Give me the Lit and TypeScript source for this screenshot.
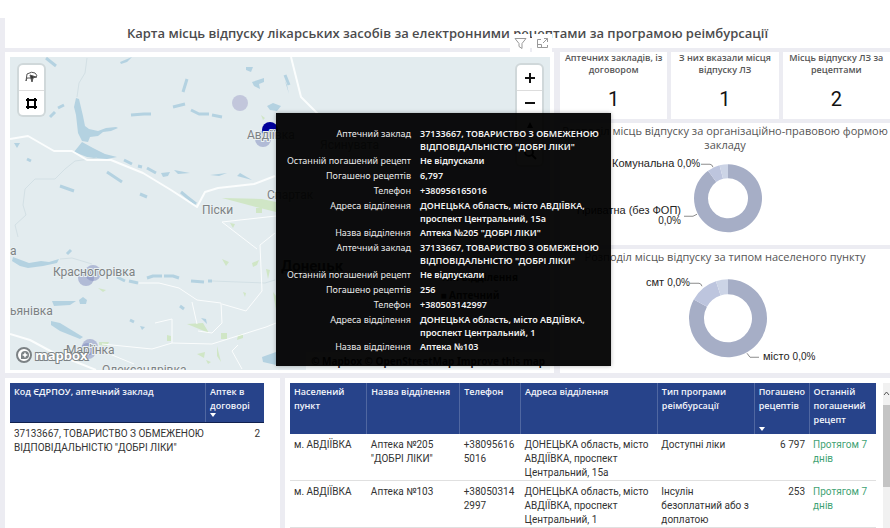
import { LitElement, html, css, svg } from "lit";
import { customElement, property } from "lit/decorators.js";

const base = css`
  :host { display: block; box-sizing: border-box; font-family: "Open Sans", "Noto Sans", sans-serif; }
  *, *::before, *::after { box-sizing: border-box; }
`;

interface Slice { value: number; color: string; }

@customElement("donut-chart")
class DonutChart extends LitElement {
  @property() viewBox = "0 0 100 100";
  @property({ attribute: false }) slices: Slice[] = [];
  @property({ attribute: false }) labels: unknown = null;
  @property({ type: Number }) cx = 0;
  @property({ type: Number }) cy = 0;
  @property({ type: Number }) outer = 30;
  @property({ type: Number }) inner = 20;

  static styles = [base, css`
    :host { display: block; min-height: 0; }
    svg { display: block; width: 100%; height: 100%; overflow: visible; }
    .lead { fill: none; stroke: #8c8c8c; stroke-width: 1; }
    .lbl { font: 11px "Liberation Sans", Arial, sans-serif; fill: #252423; }
    .lbl .pct, .lbl.pct { font-size: 10px; }
    .end { text-anchor: end; }
  `];

  private arc(from: number, to: number) {
    const pt = (r: number, t: number) => {
      const a = t * Math.PI * 2 - Math.PI / 2;
      return `${(this.cx + r * Math.cos(a)).toFixed(2)} ${(this.cy + r * Math.sin(a)).toFixed(2)}`;
    };
    const big = to - from > 0.5 ? 1 : 0;
    const { outer: o, inner: i } = this;
    return `M${pt(o, from)}A${o} ${o} 0 ${big} 1 ${pt(o, to)}L${pt(i, to)}A${i} ${i} 0 ${big} 0 ${pt(i, from)}Z`;
  }

  render() {
    let t = 0;
    return html`<svg viewBox=${this.viewBox} role="img">
      ${this.slices.map((s) => {
        const from = t;
        t += s.value;
        return svg`<path d=${this.arc(from, t)} fill=${s.color}></path>`;
      })}
      ${this.labels}
    </svg>`;
  }
}

@customElement("map-canvas")
class MapCanvas extends LitElement {
  static styles = [base, css`
    :host { display: block; position: relative; overflow: hidden; background: #e3ecef; }
    .map { position: absolute; inset: 0; width: 100%; height: 100%; }
    .water { fill: #b4d2e1; }
    .stream { fill: none; stroke: #b4d2e1; stroke-width: 3; stroke-linejoin: round; }
    .brook { fill: none; stroke: #d3e0e5; stroke-width: 1; }
    .green { fill: #d0e6c6; }
    .road { fill: none; stroke: #fbfdfd; stroke-width: 2; stroke-linejoin: round; }
    .thin { stroke-width: 1; }
    .town { font: 12px Roboto, "Noto Sans", sans-serif; fill: #7d8284; stroke: #e9f0f2; stroke-width: 2; paint-order: stroke; }
    .city { font-size: 15px; font-weight: 700; fill: #333; }
    .dot { fill: #8089bd; fill-opacity: .5; }
    .pale { fill: #b3b7d3; fill-opacity: .7; }
    .brand { font: 700 13px "Open Sans", sans-serif; fill: #fff; stroke: #7c8285; stroke-width: 2; paint-order: stroke; }
    .tools { position: absolute; top: 8px; display: flex; flex-direction: column; border-radius: 4px; background: #fff; box-shadow: 0 0 0 2px #d0d8da; }
    .left { left: 9px; }
    .right { right: 8px; }
    button { width: 25px; height: 25px; padding: 0; border: 0; background: none; display: grid; place-items: center; }
    button + button { border-top: 1px solid #ddd; }
    .legend { position: absolute; right: 32px; bottom: 66px; font: 700 10px "Noto Sans", sans-serif; line-height: 18px; color: #222; }
    .credit { position: absolute; right: 0; bottom: 0; padding: 2px 5px; font: 700 10px "Noto Sans", sans-serif; line-height: 14px; color: #222; background: #f3f7f8; white-space: nowrap; }
  `];

  render() {
    return html`
      <svg class="map" viewBox="10 57 540 313" preserveAspectRatio="xMinYMin slice">
        <g class="green">
          <path d="M222 198l40 1 14 3v10l-16-4z"></path>
          <path d="M222 259l7 3-3 4zM252 263l7-3-2 5-4 2zM187 324l16-1 6 10zM221 333h6v6h-6zM238 335l5-1v4l-6 2z"></path>
          <path d="M99 342h10l-2 4-8-1zM197 354l8-2-1 6zM167 335l4 1v5h-4zM266 269l4 1-2 9zM230 223l5 1-2 4zM256 208h6v5h-6zM98 288l8 2-3 2zM261 115l4 3-2 2z"></path>
          <path d="M217 346l4 16-4-6zM243 292l3 1-1 4zM273 292l3 4v14zM206 360l5 2-3 2z"></path>
        </g>
        <g class="water">
          <path d="M76 98l3 1 4 17 2 10 4 3 9 2 8-3 10-1 2 1-7 3-8 1-5 4-8 1-2 5-6-1-4-8-1-9-1-9-2-8z"></path>
          <path d="M82 142l11 6 12 6 12 3-10 2-13-1-7-1-13-5z"></path>
          <path d="M13 257l16 6 12-2 8 1 10-3-2 4-14 3-15 2-8-2-8-5z"></path>
          <path d="M51 321l9 2 23 14-3 2-20-8-9-6z"></path>
          <path d="M52 301l24 0-6 4-16 1zM79 300l4-3 4 3-1 4-6 0z"></path>
          <path d="M267 106l6-3 8 3-4 5-7-1zM246 67l7 0-2 5-5-2zM252 82l12-4v4l-5 2 1 5-6-3zM120 62l12-5-5 5-6 2z"></path>
          <path d="M161 173l9-1-2 4-5 1zM262 357l14-5v13l-13-3zM14 143h6l-3 5zM140 326l5 1-3 3zM201 318l5 1 1 5z"></path>
          <path d="M174 170l16 3-12 1zM210 175l17-2-8 3zM240 173l12 7-15-4zM285 81l4 13-2-9z"></path>
        </g>
        <g class="stream">
          <path d="M46 58l10 8M183 92l4-13M173 107l12-3M191 110l8 4 10 0M212 115l10 2M131 115l13-1 7 0M50 117l5-5M58 108l6-3"></path>
          <path d="M107 172l15 10M124 160l8 4M138 166l4 1M147 168l9 5M60 186l14 5M140 194l7 3M181 192l6 5 9 7M67 254l4-4"></path>
          <path d="M117 277l8 4M129 281l9 2M147 278l6-2 9 0M164 276l9 0 6 2M191 281l13 1M208 281h4M130 320l4 2M180 306l4 3M27 159l4 2M285 75l4 10"></path>
        </g>
        <path class="brook" d="M87 58l-2 15-6 10-2 14M97 158l-22 3-10 8-10 10-20 0-10 10-2 16 3 10-11 10 3 12M60 259l12-1 20 6M212 281l53 2 10-3"></path>
        <g class="road">
          <path d="M10 139l18-3 26 15h18l15 9h24l32 13 28 17 26 17 8-15 13-4 36-4 21-8"></path>
          <path d="M291 57l10 40 20 20M10 334l20 6 26 14 40 16"></path>
          <path class="thin" d="M139 283h20l20 5 18 12 24 3 1 20-10 10-14-2M192 302l5 22M222 304l24 7 16-20-2-46 15-12M222 222l35 27M155 323l17-4v24l-20 6-50-5M172 343l40 1 54-17 10-4M222 222l54-6M238 345l-6 6 10 18M100 350l34 14"></path>
        </g>
        <circle class="pale" cx="240" cy="103" r="8"></circle>
        <circle class="dot" cx="263" cy="139" r="8"></circle>
        <circle cx="270" cy="130" r="8" fill="#00009b"></circle>
        <circle class="dot" cx="86" cy="278" r="8"></circle>
        <circle class="dot" cx="93" cy="273" r="8"></circle>
        <circle class="dot" cx="90" cy="347" r="8"></circle>
        <circle class="dot" cx="88" cy="351" r="8"></circle>
        <g class="town">
          <text x="247" y="139">Авдіївка</text>
          <text x="320" y="149">Ясинувата</text>
          <text x="267" y="199">Спартак</text>
          <text x="202" y="214">Піски</text>
          <text x="10" y="255">а</text>
          <text x="53" y="276">Красногорівка</text>
          <text x="10" y="315">ьянівка</text>
          <text x="66" y="354">Мар'їнка</text>
          <text x="102" y="374">Олександрівка</text>
          <text class="city" x="281" y="271">Донецьк</text>
        </g>
        <circle cx="24" cy="355" r="7" fill="#fff" stroke="#7c8285" stroke-width="2"></circle>
        <path d="M21 359v-4a4 4 0 1 1 4 4z" fill="#7c8285"></path>
        <path d="M25 352l1 2 2 1-2 1-1 2-1-2-2-1 2-1z" fill="#fff"></path>
        <text class="brand" x="35" y="360">mapbox</text>
      </svg>
      <div class="tools left">
        <button aria-label="Ласо"><svg width="13" height="13" viewBox="0 0 13 13" fill="none" stroke="#555"><path d="M1 10l1-7q5-3 8-1 3 2 1 5M1 10l1-3 4 0"></path><path d="M5 4l6 2-3 1-1 4z" fill="#333"></path></svg></button>
        <button aria-label="Багатокутник"><svg width="11" height="11" viewBox="0 0 11 11" fill="none" stroke="#000" stroke-width="2"><path d="M2 2h7v7H2z"></path><path d="M0 2h3M8 2h3M0 9h3M8 9h3M2 0v3M9 0v3M2 8v3M9 8v3"></path></svg></button>
      </div>
      <div class="tools right">
        <button aria-label="Збільшити"><svg width="10" height="10" stroke="#111" stroke-width="2"><path d="M5 0v10M0 5h10"></path></svg></button>
        <button aria-label="Зменшити"><svg width="10" height="10" stroke="#111" stroke-width="2"><path d="M0 5h10"></path></svg></button>
        <button aria-label="Північ"><svg width="10" height="12"><path d="M5 0l3 6H2z"></path></svg></button>
        <button aria-label="Пошук"><svg width="14" height="14" fill="none" stroke="#111" stroke-width="2"><circle cx="6" cy="6" r="4"></circle><path d="M9 9l4 4"></path></svg></button>
      </div>
      <div class="legend"><div>Тип відділення</div><div>■ Аптечний</div></div>
      <div class="credit">© Mapbox © OpenStreetMap Improve this map</div>
    `;
  }
}

const org = "37133667, ТОВАРИСТВО З ОБМЕЖЕНОЮ ВІДПОВІДАЛЬНІСТЮ \"ДОБРІ ЛІКИ\"";
const tip: [string, string][] = [
  ["Аптечний заклад", org],
  ["Останній погашений рецепт", "Не відпускали"],
  ["Погашено рецептів", "6,797"],
  ["Телефон", "+380956165016"],
  ["Адреса відділення", "ДОНЕЦЬКА область, місто АВДІЇВКА, проспект Центральний, 15а"],
  ["Назва відділення", "Аптека №205 \"ДОБРІ ЛІКИ\""],
  ["Аптечний заклад", org],
  ["Останній погашений рецепт", "Не відпускали"],
  ["Погашено рецептів", "256"],
  ["Телефон", "+380503142997"],
  ["Адреса відділення", "ДОНЕЦЬКА область, місто АВДІЇВКА, проспект Центральний, 1"],
  ["Назва відділення", "Аптека №103"],
];

const rows = [
  ["м. АВДІЇВКА", "Аптека №205 \"ДОБРІ ЛІКИ\"", "+380956165016", "ДОНЕЦЬКА область, місто АВДІЇВКА, проспект Центральний, 15а", "Доступні ліки", "6 797", "Протягом 7 днів"],
  ["м. АВДІЇВКА", "Аптека №103", "+380503142997", "ДОНЕЦЬКА область, місто АВДІЇВКА, проспект Центральний, 1", "Інсулін безоплатний або з доплатою", "253", "Протягом 7 днів"],
];

const cards = [
  ["Аптечних закладів, із договором", "1"],
  ["З них вказали місця відпуску ЛЗ", "1"],
  ["Місць відпуску ЛЗ за рецептами", "2"],
];

@customElement("app-root")
class AppRoot extends LitElement {
  static styles = [base, css`
    :host { display: grid; grid-template-rows: 18px 30px minmax(325px, 325fr) minmax(155px, 155fr); height: 100vh; overflow: hidden; background: #fff; color: #333; }
    .title { grid-row: 2; margin: 0; border-left: 5px solid #ececf2; text-align: center; font-size: 13px; line-height: 30px; font-weight: 600; color: #4b4b4d; white-space: nowrap; }
    .back { background: #ececf2; padding-left: 5px; }
    .upper { grid-row: 3; display: grid; grid-template-columns: minmax(0, 549fr) minmax(0, 330fr); gap: 6px; padding-top: 4px; }
    .mapcard { position: relative; background: #fff; padding: 5px 4px 3px 5px; display: grid; }
    .actions { position: absolute; right: 2px; top: -18px; height: 18px; display: flex; gap: 2px; }
    .actions button { width: 20px; height: 18px; padding: 0; border: 0; background: #fff; display: grid; place-items: center; }
    .tooltip { position: absolute; z-index: 2; left: 271px; top: 61px; width: 335px; margin: 0; padding: 14px 8px 12px 10px; background: rgba(0, 0, 0, .95); color: #e8e8e8; display: grid; grid-template-columns: 125px 1fr; column-gap: 9px; row-gap: 1px; font-family: "Noto Sans", sans-serif; font-size: 9px; line-height: 13px; box-shadow: 0 0 4px rgba(0, 0, 0, .3); }
    dt, dd { margin: 0; min-height: 14px; }
    dt { text-align: right; white-space: nowrap; }
    dd { font-weight: 600; color: #f2f2f2; }
    .side { display: grid; grid-template-rows: 67px minmax(0, 122fr) minmax(0, 123fr); gap: 4px; }
    .cards { display: grid; grid-template-columns: repeat(3, minmax(0, 1fr)); gap: 4px; }
    .card { background: #fff; text-align: center; }
    .card h2 { margin: 0; font-size: 9px; line-height: 12px; font-weight: 600; color: #555; }
    .card p { margin: 10px 0 0; font: 20px Roboto, sans-serif; line-height: 26px; color: #111; }
    .panel { background: #fff; display: grid; grid-template-rows: auto minmax(0, 1fr); }
    .panel h2 { margin: 0; padding-top: 1px; text-align: center; font-size: 11px; line-height: 14px; font-weight: 400; color: #555; }
    .lower { grid-row: 4; display: grid; grid-template-columns: minmax(0, 275fr) minmax(0, 605fr); gap: 5px; padding-top: 5px; min-height: 0; }
    .sheet { background: #fff; padding: 5px 0 0 5px; overflow: hidden; display: flex; align-items: flex-start; }
    .small { padding-right: 16px; }
    table { width: 100%; border-collapse: collapse; table-layout: fixed; font-size: 10px; line-height: 14px; }
    th { background: #27438a; color: #f3f5fa; font-size: 9px; font-weight: 600; text-align: left; vertical-align: top; padding: 2px 4px; border-right: 1px solid #5067a1; }
    th:last-child { border-right: 0; }
    td { font-family: Roboto, "Noto Sans", sans-serif; vertical-align: top; padding: 4px 4px 0; overflow-wrap: anywhere; border-bottom: 1px solid #e0e0e0; }
    .small td { border-bottom: 0; padding-right: 0; }
    .small .num { padding-right: 4px; }
    .small th { height: 39px; border-bottom: 1px solid #10204e; }
    .big th { height: 51px; }
    .num { text-align: right; }
    .ok { color: #3fa374; }
    .sort { display: block; width: 0; height: 0; border: 3px solid transparent; border-top: 4px solid #fff; border-bottom: 0; }
    .low { margin-top: 14px; }
    .scroll { flex: none; width: 7px; margin-left: 7px; align-self: stretch; background: #f1f1f1; }
    .scroll svg { display: block; margin: 6px 0 8px; }
    .thumb { height: 82px; background: #c4c4c4; }
  `];

  render() {
    return html`
      <h1 class="title">Карта місць відпуску лікарських засобів за електронними рецептами за програмою реімбурсації</h1>
      <div class="back upper">
        <section class="mapcard">
          <map-canvas></map-canvas>
          <div class="actions">
            <button aria-label="Фільтри"><svg width="13" height="13" fill="none" stroke="#999"><path d="M1 1.5h11l-4 5v5l-3-2v-3z"></path></svg></button>
            <button aria-label="Режим фокуса"><svg width="13" height="13" fill="none" stroke="#999"><path d="M5 2.500H1.500v8h10V8M1.500 7.500h4v3M8 1.500h3.500V5M11.500 1.500L7 6"></path></svg></button>
          </div>
          <dl class="tooltip">${tip.map(([k, v]) => html`<dt>${k}</dt><dd>${v}</dd>`)}</dl>
        </section>
        <div class="side">
          <div class="cards">${cards.map(([k, v]) => html`<section class="card"><h2>${k}</h2><p>${v}</p></section>`)}</div>
          <section class="panel">
            <h2>Розподіл місць відпуску за організаційно-правовою формою закладу</h2>
            <donut-chart .viewBox=${"560 153 330 93"} cx="728" cy="199" outer="34" inner="20"
              .slices=${[{ value: 0.9, color: "#a6aec6" }, { value: 0.06, color: "#bdc5de" }, { value: 0.04, color: "#ccd4e6" }]}
              .labels=${svg`
                <path class="lead" d="M701 165h9q2 0 3 3M684 217h9l4-2"></path>
                <text class="lbl" x="612" y="168">Комунальна <tspan class="pct">0,0%</tspan></text>
                <text class="lbl end" x="681" y="215">Приватна (без ФОП)</text>
                <text class="lbl pct end" x="681" y="225">0,0%</text>`}></donut-chart>
          </section>
          <section class="panel">
            <h2>Розподіл місць відпуску за типом населеного пункту</h2>
            <donut-chart .viewBox=${"560 265 330 108"} cx="728" cy="319" outer="39" inner="24"
              .slices=${[{ value: 0.83, color: "#a6aec6" }, { value: 0.12, color: "#bdc5de" }, { value: 0.05, color: "#ccd4e6" }]}
              .labels=${svg`
                <path class="lead" d="M690 284h9q2 0 3 3M747 354l3 4h9"></path>
                <text class="lbl" x="646" y="287">смт <tspan class="pct">0,0%</tspan></text>
                <text class="lbl" x="763" y="361">місто <tspan class="pct">0,0%</tspan></text>`}></donut-chart>
          </section>
        </div>
      </div>
      <div class="back lower">
        <section class="sheet small">
          <table>
            <colgroup><col style="width:77%"><col></colgroup>
            <thead><tr><th>Код ЄДРПОУ, аптечний заклад</th><th>Аптек в договорі<span class="sort"></span></th></tr></thead>
            <tbody><tr><td>${org}</td><td class="num">2</td></tr></tbody>
          </table>
        </section>
        <section class="sheet big">
          <table>
            <colgroup>${[77, 93, 61, 137, 97, 55, 67].map((w) => html`<col style="width:${(w / 587) * 100}%">`)}</colgroup>
            <thead><tr>
              <th>Населений пункт</th><th>Назва відділення</th><th>Телефон</th><th>Адреса відділення</th>
              <th>Тип програми реімбурсації</th><th>Погашено рецептів<span class="sort low"></span></th><th>Останній погашений рецепт</th>
            </tr></thead>
            <tbody>${rows.map((r) => html`<tr>${r.map((c, i) => html`<td class=${i === 5 ? "num" : i === 6 ? "ok" : ""}>${c}</td>`)}</tr>`)}</tbody>
          </table>
          <div class="scroll"><svg width="7" height="8" fill="none" stroke="#555"><path d="M1 6l2.500-3L6 6"></path></svg><div class="thumb"></div></div>
        </section>
      </div>
    `;
  }
}
